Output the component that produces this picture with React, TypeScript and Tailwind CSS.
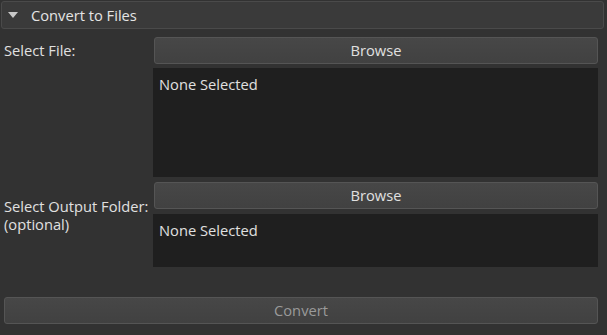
import React from "react";

const font = { fontFamily: '"Open Sans", "Noto Sans", sans-serif' };

function Btn({ label, disabled }: { label: string; disabled?: boolean }) {
  return (
    <div
      className={`flex h-[27px] items-center justify-center rounded-[3px] border border-[#555555] bg-gradient-to-b from-[#474747] to-[#414141] text-[14.7px] ${
        disabled ? "text-[#9a9a9a]" : "text-[#e0e0e0]"
      }`}
    >
      {label}
    </div>
  );
}

export default function App() {
  return (
    <div className="h-[335px] w-[607px] overflow-hidden bg-[#323232]" style={font}>
      <div className="pl-[1px] pr-[3px] pt-[1px]">
        <div className="flex h-[28px] items-center rounded-[3px] border border-[#4a4a4a] bg-[#3a3a3a] text-[14.7px] text-[#e4e4e4]">
          <svg width="10" height="6" viewBox="0 0 10 6" className="ml-[6px]">
            <polygon points="0,0 10,0 5,6" fill="#c8c8c8" />
          </svg>
          <span className="ml-[13px]">Convert to Files</span>
        </div>
      </div>
      <div className="grid grid-cols-[149px_445px] pl-[4px] pt-[8px]">
        <div className="pt-[4px] text-[14.7px] leading-[19px] text-[#e0e0e0]">Select File:</div>
        <div className="flex flex-col">
          <div className="pl-[1px]">
            <Btn label="Browse" />
          </div>
          <div className="mt-[4px] h-[109px] bg-[#1f1f1f] pl-[6px] pt-[7px] text-[14.7px] leading-[19px] text-[#e0e0e0]">
            None Selected
          </div>
        </div>
        <div className="whitespace-nowrap pt-[20px] text-[14.7px] leading-[18px] text-[#e0e0e0]">
          Select Output Folder:
          <br />
          (optional)
        </div>
        <div className="mt-[5px] flex flex-col">
          <div className="pl-[1px]">
            <Btn label="Browse" />
          </div>
          <div className="mt-[5px] h-[53px] bg-[#1f1f1f] pl-[6px] pt-[7px] text-[14.7px] leading-[19px] text-[#e0e0e0]">
            None Selected
          </div>
        </div>
      </div>
      <div className="pl-[4px] pr-[9px] pt-[30px]">
        <div className="h-[28px]">
          <Btn label="Convert" disabled />
        </div>
      </div>
    </div>
  );
}
